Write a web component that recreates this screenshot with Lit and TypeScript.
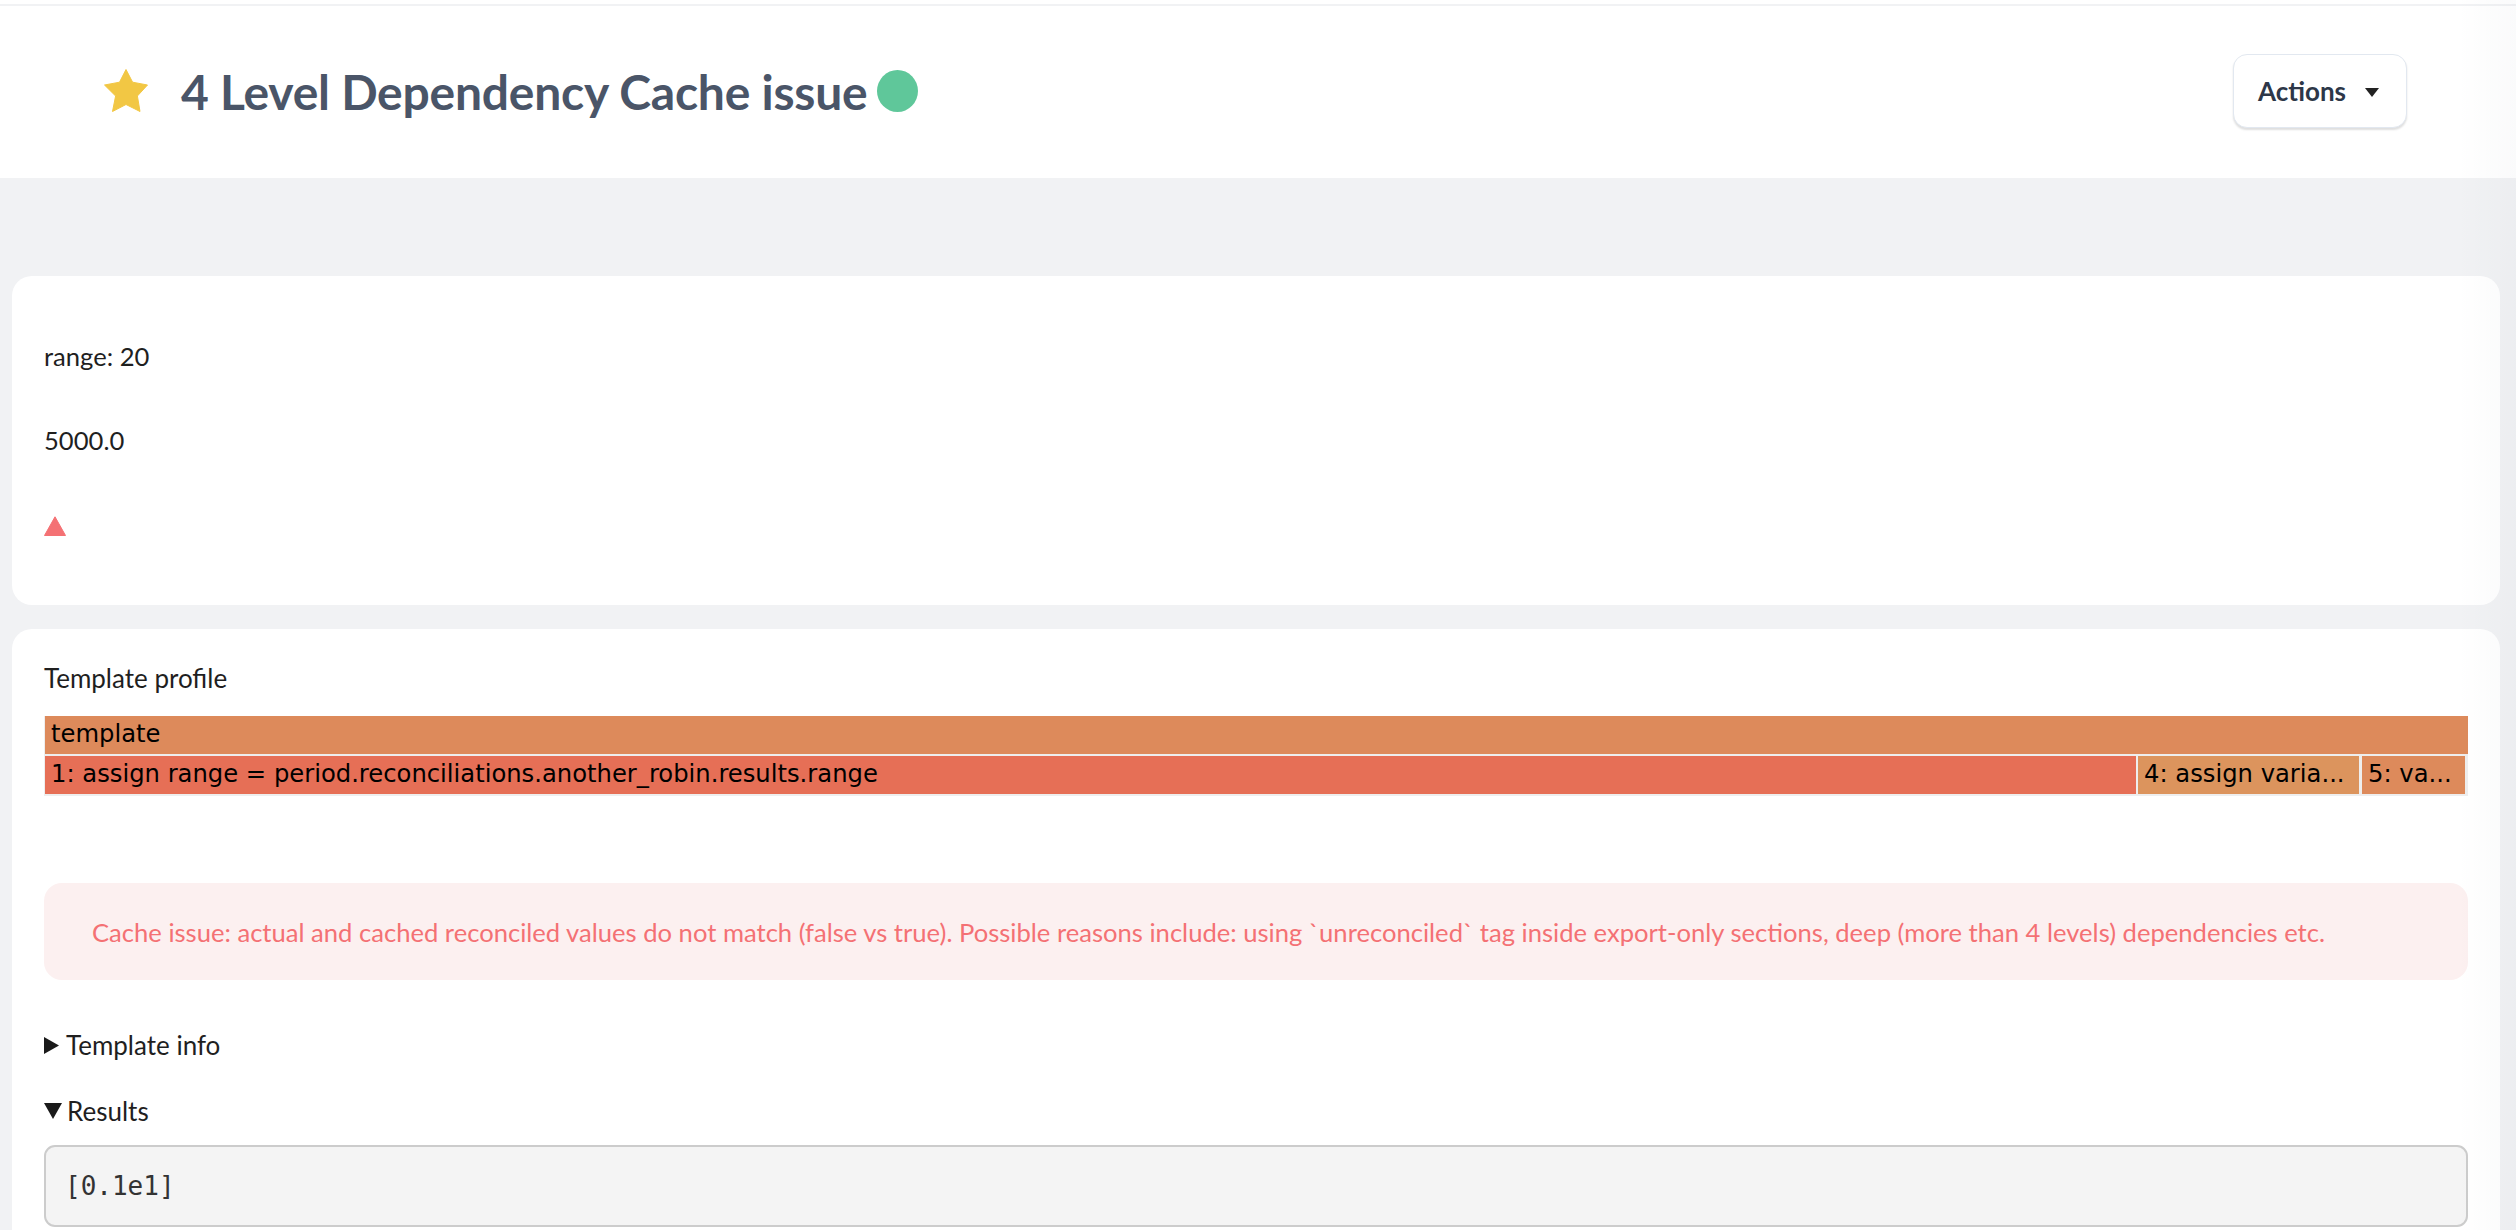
import { LitElement, html, css } from "lit";
import { customElement } from "lit/decorators.js";

@customElement("app-root")
export class AppRoot extends LitElement {
  static styles = css`
    :host { display: block; position: relative; height: 1230px; overflow: hidden; background: #f1f2f4; font-family: "Lato", sans-serif; color: #1f1f1f; font-size: 25.6px; line-height: 38px; }
    .top { height: 4px; background: #fff; }
    .strip { height: 2px; background: #f1f2f4; }
    header { height: 172px; background: #fff; display: flex; align-items: center; padding: 0 109px 0 104px; box-sizing: border-box; }
    .star { width: 44px; height: 43px; display: block; margin-right: 33px; margin-bottom: 3px; }
    h1 { margin: 0; font-size: 48px; font-weight: 700; color: #4a5568; line-height: 60px; letter-spacing: -0.23px; }
    .dot { width: 41px; height: 42px; border-radius: 50%; background: #5fc79a; margin-left: 10px; margin-bottom: 2px; }
    .spacer { flex: 1; }
    .btn { height: 74px; width: 174px; margin-bottom: 2px; box-sizing: border-box; border: 1px solid #e2e8f0; border-radius: 14px; background: #fff; box-shadow: 0 2px 2px rgba(0,0,0,.13); display: flex; align-items: center; padding-left: 24px; font-weight: 700; color: #2d3748; font-size: 26px; }
    .caret { margin-left: 19px; margin-top: 2px; width: 0; height: 0; border: 7px solid transparent; border-top: 9px solid #222; border-bottom: 0; }
    main { padding: 98px 16px 0 12px; display: flex; flex-direction: column; gap: 24px; }
    .card { background: #fff; border-radius: 20px; padding: 32px; }
    .c1 { height: 329px; box-sizing: border-box; padding-top: 61px; }
    .c1 p { margin: 0 0 46px; }
    .c1 p + p { margin-bottom: 57px; }
    .tri { display: block; width: 22px; height: 20px; }
    .c2 { padding-top: 30px; height: 700px; box-sizing: border-box; }
    .title { margin: 0 0 19px; font-size: 26px; }
    .flame { font-family: "DejaVu Sans", sans-serif; font-size: 24.25px; color: #000; background: #eee; padding: 0 0 2px; width: 2424px; }
    .row { display: flex; height: 38px; line-height: 36px; padding-left: 1px; }
    .row + .row { margin-top: 2px; }
    .seg { box-sizing: border-box; padding-left: 6px; white-space: nowrap; overflow: hidden; }
    .tmpl { width: 100%; background: #dd8a5b; }
    .s1 { width: 2091px; background: #e66f56; }
    .s4 { width: 221px; margin-left: 2px; background: #dc945d; }
    .s5 { width: 103px; margin-left: 3px; background: #dd8a5b; }
    .alert { margin-top: 87px; height: 97px; box-sizing: border-box; width: 2424px; background: #fcf0f0; border-radius: 18px; padding: 0 48px; display: flex; align-items: center; color: #f47174; }
    .info { margin-top: 46px; display: flex; align-items: center; height: 38px; font-size: 26px; }
    .res { margin-top: 28px; display: flex; align-items: center; height: 38px; font-size: 26px; }
    .ar { width: 15px; height: 17px; margin-right: 7px; display: block; }
    .ad { width: 18px; height: 16px; margin-right: 5px; display: block; }
    pre { margin: 15px 0 0; width: 2424px; height: 82px; box-sizing: border-box; border: 2px solid #ccc; border-radius: 11px; background: #f4f4f4; padding: 0 19px; font-family: "DejaVu Sans Mono", monospace; font-size: 26px; line-height: 78px; color: #333; }
    .gutter { position: absolute; top: 0; right: 0; bottom: 0; width: 60px; background: linear-gradient(to right, rgba(0,20,60,0), rgba(0,20,60,.02)); pointer-events: none; }
  `;
  render() {
    return html`
      <div class="top"></div><div class="strip"></div>
      <header>
        <svg class="star" viewBox="0 0 44 43"><path fill="#f2c744" stroke="#f2c744" stroke-width="1" stroke-linejoin="round" d="M22 .5L28.600 13.200 43.500 16 33.400 27 36 42.500 22 35.500 8.500 42.500 11.600 27 .5 16 15.500 13.200z"/></svg>
        <h1>4 Level Dependency Cache issue</h1>
        <div class="dot"></div>
        <div class="spacer"></div>
        <div class="btn">Actions<span class="caret"></span></div>
      </header>
      <main>
        <section class="card c1">
          <p>range: 20</p>
          <p>5000.0</p>
          <svg class="tri" viewBox="0 0 22 20"><path fill="#f47174" stroke="#f47174" stroke-width="1" stroke-linejoin="round" d="M11 .8L21.500 19.500H.5z"/></svg>
        </section>
        <section class="card c2">
          <p class="title">Template profile</p>
          <div class="flame">
            <div class="row"><div class="seg tmpl">template</div></div>
            <div class="row">
              <div class="seg s1">1: assign range = period.reconciliations.another_robin.results.range</div>
              <div class="seg s4">4: assign varia...</div>
              <div class="seg s5">5: va...</div>
            </div>
          </div>
          <div class="alert">Cache issue: actual and cached reconciled values do not match (false vs true). Possible reasons include: using \`unreconciled\` tag inside export-only sections, deep (more than 4 levels) dependencies etc.</div>
          <div class="info"><svg class="ar" viewBox="0 0 15 17"><path fill="#1a1a1a" d="M0 0l15 8.500L0 17z"/></svg>Template info</div>
          <div class="res"><svg class="ad" viewBox="0 0 18 16"><path fill="#1a1a1a" d="M0 0h18L9 16z"/></svg>Results</div>
          <pre>[0.1e1]</pre>
        </section>
      </main>
      <div class="gutter"></div>
    `;
  }
}
